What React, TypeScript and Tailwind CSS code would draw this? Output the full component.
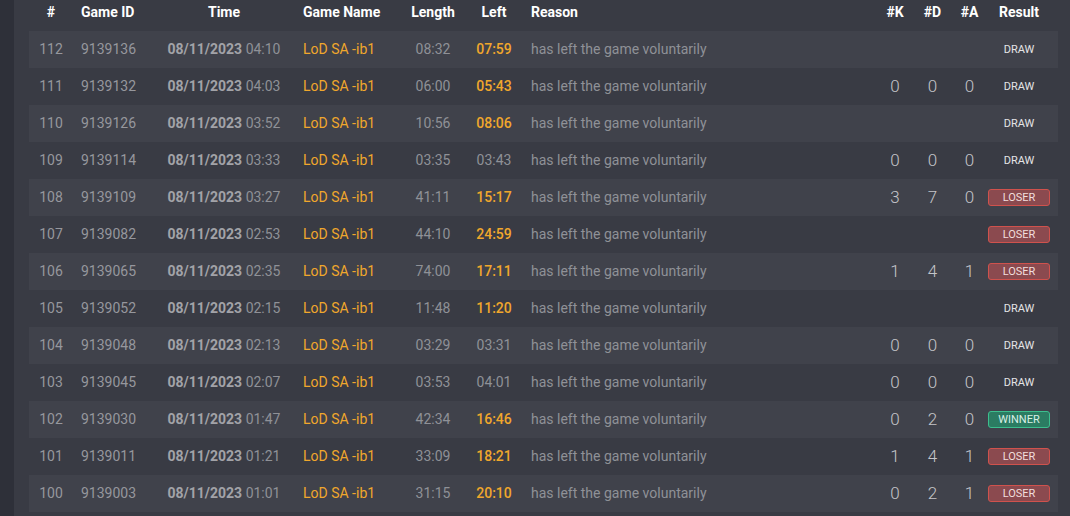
import React from "react";

type Row = {
  n: number; id: string; time: string; len: string; left: string; hot: boolean;
  k?: number; d?: number; a?: number; res: "DRAW" | "LOSER" | "WINNER";
};

const rows: Row[] = [
  { n: 112, id: "9139136", time: "04:10", len: "08:32", left: "07:59", hot: true, res: "DRAW" },
  { n: 111, id: "9139132", time: "04:03", len: "06:00", left: "05:43", hot: true, k: 0, d: 0, a: 0, res: "DRAW" },
  { n: 110, id: "9139126", time: "03:52", len: "10:56", left: "08:06", hot: true, res: "DRAW" },
  { n: 109, id: "9139114", time: "03:33", len: "03:35", left: "03:43", hot: false, k: 0, d: 0, a: 0, res: "DRAW" },
  { n: 108, id: "9139109", time: "03:27", len: "41:11", left: "15:17", hot: true, k: 3, d: 7, a: 0, res: "LOSER" },
  { n: 107, id: "9139082", time: "02:53", len: "44:10", left: "24:59", hot: true, res: "LOSER" },
  { n: 106, id: "9139065", time: "02:35", len: "74:00", left: "17:11", hot: true, k: 1, d: 4, a: 1, res: "LOSER" },
  { n: 105, id: "9139052", time: "02:15", len: "11:48", left: "11:20", hot: true, res: "DRAW" },
  { n: 104, id: "9139048", time: "02:13", len: "03:29", left: "03:31", hot: false, k: 0, d: 0, a: 0, res: "DRAW" },
  { n: 103, id: "9139045", time: "02:07", len: "03:53", left: "04:01", hot: false, k: 0, d: 0, a: 0, res: "DRAW" },
  { n: 102, id: "9139030", time: "01:47", len: "42:34", left: "16:46", hot: true, k: 0, d: 2, a: 0, res: "WINNER" },
  { n: 101, id: "9139011", time: "01:21", len: "33:09", left: "18:21", hot: true, k: 1, d: 4, a: 1, res: "LOSER" },
  { n: 100, id: "9139003", time: "01:01", len: "31:15", left: "20:10", hot: true, k: 0, d: 2, a: 1, res: "LOSER" },
];

function Result({ r }: { r: Row["res"] }) {
  if (r === "DRAW") return <span className="text-[11px] text-[#e4e4e6] leading-none">DRAW</span>;
  if (r === "WINNER")
    return (
      <span className="flex h-[17px] w-[62px] items-center justify-center rounded-[3px] border border-[#3cbf8e] bg-[#2b7c62] text-[11px] leading-none text-[#d9efe6]">
        WINNER
      </span>
    );
  return (
    <span className="flex h-[17px] w-[62px] items-center justify-center rounded-[3px] border border-[#d0524d] bg-[#8b4a4f] text-[11px] leading-none text-[#f1dede]">
      LOSER
    </span>
  );
}

export default function App() {
  return (
    <div
      className="flex h-[516px] w-[1070px] overflow-hidden bg-[#393b44]"
      style={{ fontFamily: "Roboto, 'Open Sans', sans-serif" }}
    >
      <div className="w-[14px] shrink-0 bg-[#2e3039]" />
      <div className="flex flex-col pl-[15px]">
        <div className="flex h-[31px] w-[1029px] items-start pt-[2px] text-[14px] font-bold text-white">
          <div className="w-[44px] text-center">#</div>
          <div className="w-[87px] pl-[8px]">Game ID</div>
          <div className="w-[128px] text-center">Time</div>
          <div className="w-[104px] pl-[15px]">Game Name</div>
          <div className="w-[82px] text-center">Length</div>
          <div className="w-[40px] text-center">Left</div>
          <div className="w-[362px] pl-[17px]">Reason</div>
          <div className="w-[38px] text-center">#K</div>
          <div className="w-[37px] text-center">#D</div>
          <div className="w-[37px] text-center">#A</div>
          <div className="w-[62px] text-center">Result</div>
        </div>
        {rows.map((r, i) => (
          <div
            key={r.n}
            className={`flex h-[37px] w-[1029px] items-center text-[14px] ${i % 2 === 0 ? "bg-[#40424b]" : ""}`}
          >
            <div className="w-[44px] text-center text-[#96979d]">{r.n}</div>
            <div className="w-[87px] pl-[8px] text-[#96979d]">{r.id}</div>
            <div className="w-[128px] whitespace-nowrap text-center text-[#8f9197]">
              <span className="font-bold text-[#a2a3a8]">08/11/2023</span> {r.time}
            </div>
            <div className="w-[104px] whitespace-nowrap pl-[15px] text-[#f0a72c]">LoD SA -ib1</div>
            <div className="w-[82px] text-center text-[#8f9197]">{r.len}</div>
            <div
              className={`w-[40px] text-center ${r.hot ? "font-medium text-[#f0a72c]" : "text-[#8f9197]"}`}
            >
              {r.left}
            </div>
            <div className="w-[362px] whitespace-nowrap pl-[17px] text-[#8f9197]">has left the game voluntarily</div>
            <div className="w-[38px] text-center text-[17px] font-light text-[#c4c5c9]">{r.k ?? ""}</div>
            <div className="w-[37px] text-center text-[17px] font-light text-[#c4c5c9]">{r.d ?? ""}</div>
            <div className="w-[37px] text-center text-[17px] font-light text-[#c4c5c9]">{r.a ?? ""}</div>
            <div className="flex w-[62px] justify-center">
              <Result r={r.res} />
            </div>
          </div>
        ))}
      </div>
    </div>
  );
}
